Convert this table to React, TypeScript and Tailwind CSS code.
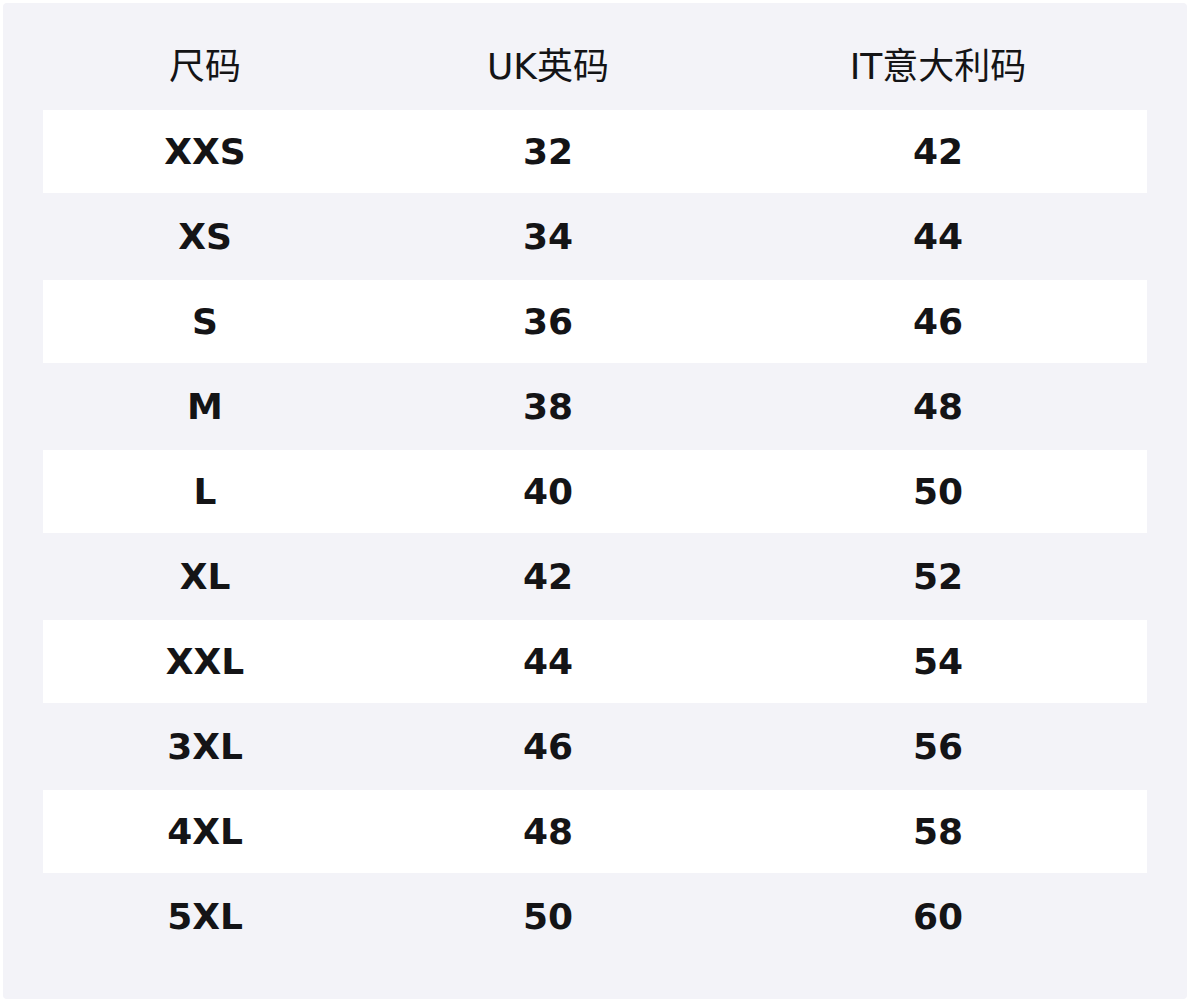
const rows: [string, string, string][] = [
  ["XXS", "32", "42"],
  ["XS", "34", "44"],
  ["S", "36", "46"],
  ["M", "38", "48"],
  ["L", "40", "50"],
  ["XL", "42", "52"],
  ["XXL", "44", "54"],
  ["3XL", "46", "56"],
  ["4XL", "48", "58"],
  ["5XL", "50", "60"],
];

const font = { fontFamily: '"DejaVu Sans", "Noto Sans CJK SC", sans-serif' };

function Row({ cells, head, white }: { cells: string[]; head?: boolean; white?: boolean }) {
  return (
    <div
      className={`flex h-[83px] items-center pt-[1px] text-[36px] text-[#141416] ${
        head ? "font-normal" : "font-bold"
      } ${white ? "bg-white" : ""}`}
    >
      <div className="w-[324px] text-center">{cells[0]}</div>
      <div className="w-[362px] text-center">{cells[1]}</div>
      <div className="flex-1 text-center">{cells[2]}</div>
    </div>
  );
}

export default function App() {
  return (
    <div className="min-h-screen bg-white p-[3px]" style={font}>
      <div className="h-[996px] w-[1184px] rounded-sm bg-[#f3f3f8] px-[40px] pt-[22px]">
        <div className="flex flex-col gap-[2px]">
          <Row head cells={["尺码", "UK英码", "IT意大利码"]} />
          {rows.map((r, i) => (
            <Row key={r[0]} cells={r} white={i % 2 === 0} />
          ))}
        </div>
      </div>
    </div>
  );
}
